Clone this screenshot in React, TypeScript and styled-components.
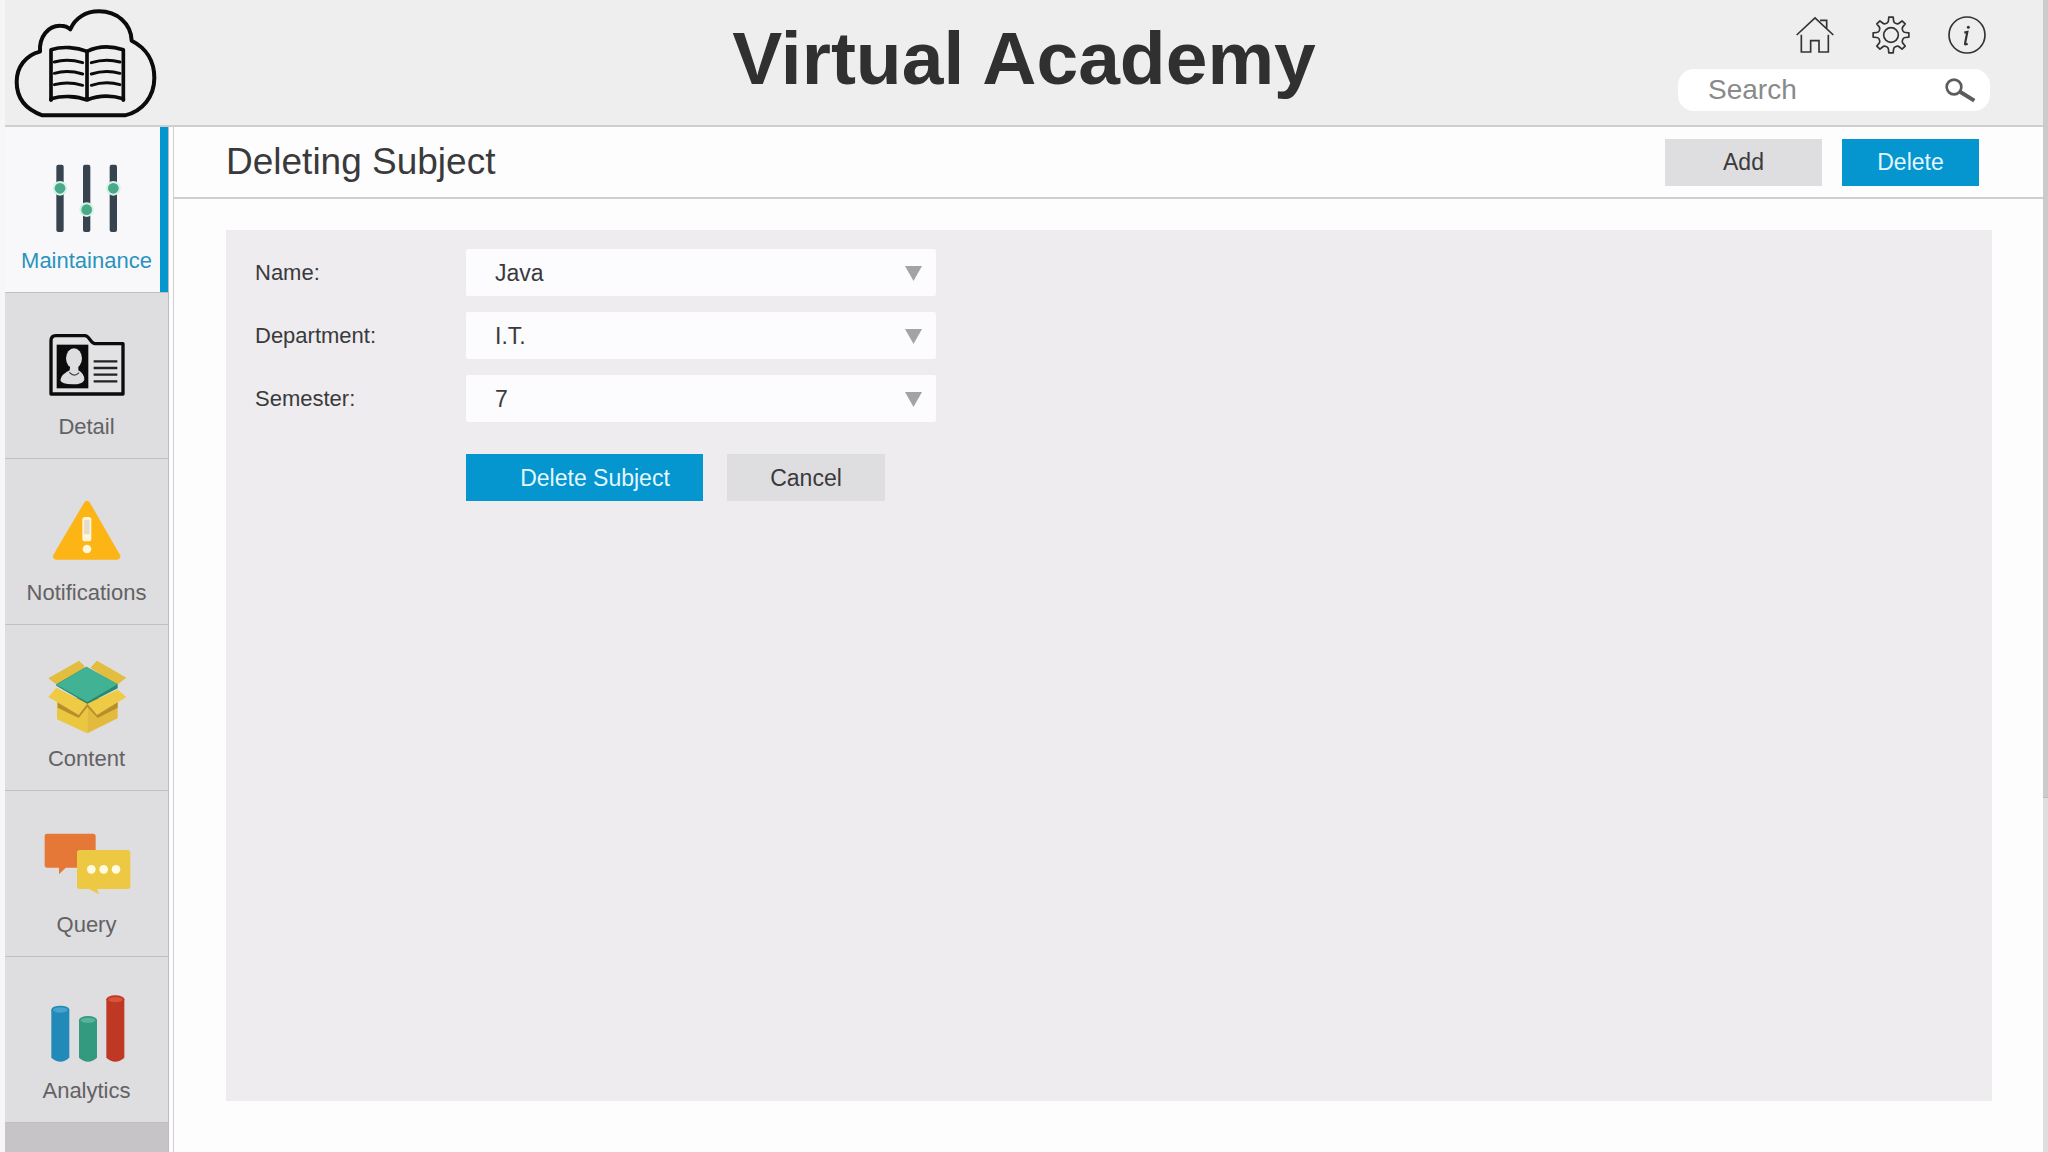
import React from "react";
import styled, { createGlobalStyle } from "styled-components";

const color = {
  ink: "#3a3a3c",
  title: "#303030",
  muted: "#626264",
  blue: "#0595cf",
  onBlue: "#e2f7ff",
  bar: "#eeeeee",
  tile: "#dedddf",
  line: "#cfcfd0",
  panel: "#eeecef",
  page: "#fdfdfd",
};

const GlobalStyle = createGlobalStyle`
  *, *::before, *::after { box-sizing: border-box; }
  body {
    margin: 0;
    background: ${color.page};
    color: ${color.ink};
    font-family: "Liberation Sans", Arial, sans-serif;
    font-size: 23px;
    line-height: 26px;
  }
  button, input, select { font: inherit; color: inherit; }
`;

const Frame = styled.div`
  display: flex;
  min-height: 100vh;
`;

const Gutter = styled.div`
  flex: 0 0 5px;
  background: #f6f6f7;
`;

const Rail = styled.div`
  display: flex;
  flex: 0 0 5px;
  background: #dedde0;
`;

const RailThumb = styled.div`
  width: 100%;
  height: 69.3%;
  border-bottom: 1px solid #bcbcbe;
  background: #cbcbcd;
`;

const Shell = styled.div`
  display: flex;
  flex: 1;
  flex-direction: column;
  min-width: 0;
`;

const Header = styled.header`
  display: grid;
  grid-template-columns: 1fr auto 1fr;
  align-items: center;
  height: 127px;
  border-bottom: 2px solid ${color.line};
  background: ${color.bar};
`;

const HeaderSide = styled.div`
  display: flex;
  padding-left: 8px;
`;

const LogoLink = styled.a`
  display: flex;
`;

const SiteTitle = styled.h1`
  margin: 0;
  color: ${color.title};
  font-size: 75px;
  line-height: 88px;
  padding-bottom: 10px;
  white-space: nowrap;
`;

const HeaderTools = styled.div`
  display: flex;
  flex-direction: column;
  align-items: flex-end;
  gap: 15px;
  padding: 2px 53px 0 0;
`;

const ToolLinks = styled.nav`
  display: flex;
  gap: 38px;
  padding: 0 4px;
`;

const ToolLink = styled.a`
  display: flex;
  color: #333333;
`;

const SearchBox = styled.form`
  display: flex;
  align-items: center;
  width: 312px;
  height: 42px;
  padding: 0 14px 0 30px;
  border-radius: 16px;
  background: #ffffff;
`;

const SearchInput = styled.input`
  flex: 1;
  min-width: 0;
  padding: 0;
  border: 0;
  outline: 0;
  background: transparent;
  font-size: 28px;
  line-height: 32px;
  &::placeholder { color: #8a8a8a; opacity: 1; }
`;

const SearchButton = styled.button`
  display: flex;
  padding: 0;
  border: 0;
  background: none;
  cursor: pointer;
`;

const Body = styled.div`
  display: flex;
  flex: 1;
`;

const Sidebar = styled.nav`
  flex: 0 0 164px;
  border-right: 1px solid #bdbbc0;
  background: #c6c4c7;
`;

const NavItem = styled.a<{ $active?: boolean }>`
  display: flex;
  flex-direction: column;
  align-items: center;
  justify-content: flex-end;
  gap: 7px;
  height: 166px;
  padding-bottom: 18px;
  border-bottom: 1px solid #c0bfc1;
  background: ${(p) => (p.$active ? "#f8f8fa" : color.tile)};
  box-shadow: ${(p) => (p.$active ? `inset -8px 0 ${color.blue}` : "none")};
  color: ${(p) => (p.$active ? "#2a93bd" : color.muted)};
  font-size: 22px;
  text-decoration: none;
`;

const Main = styled.main`
  display: flex;
  flex: 1;
  flex-direction: column;
  min-width: 0;
  margin-left: 4px;
  border-left: 1px solid #d3cfd2;
`;

const TitleBar = styled.div`
  display: flex;
  align-items: center;
  justify-content: space-between;
  height: 72px;
  padding: 0 64px 0 52px;
  border-bottom: 2px solid ${color.line};
`;

const PageTitle = styled.h2`
  margin: 0;
  font-size: 37px;
  font-weight: 400;
  line-height: 42px;
`;

const Actions = styled.div`
  display: flex;
  gap: 20px;
`;

const Button = styled.button<{ $primary?: boolean; $width: number }>`
  width: ${(p) => p.$width}px;
  height: 47px;
  padding: 0;
  border: 0;
  background: ${(p) => (p.$primary ? color.blue : color.tile)};
  color: ${(p) => (p.$primary ? color.onBlue : color.ink)};
  cursor: pointer;
`;

const SubmitButton = styled(Button)`
  padding-left: 21px;
`;

const Panel = styled.form`
  flex: 1;
  margin: 31px 51px 51px 52px;
  padding: 19px 29px;
  background: ${color.panel};
`;

const Fields = styled.div`
  display: grid;
  gap: 16px;
`;

const Field = styled.div`
  display: grid;
  grid-template-columns: 211px minmax(0, 470px);
  align-items: center;
`;

const FieldLabel = styled.label`
  font-size: 22px;
`;

const SelectWrap = styled.div`
  position: relative;
  display: flex;
`;

const Select = styled.select`
  appearance: none;
  width: 100%;
  height: 47px;
  padding: 0 44px 0 29px;
  border: 0;
  border-radius: 2px;
  background: #fcfbfd;
`;

const Arrow = styled.svg`
  position: absolute;
  top: 17px;
  right: 14px;
  pointer-events: none;
`;

const FormActions = styled.div`
  display: flex;
  gap: 24px;
  margin: 32px 0 0 211px;
`;

function LogoIcon() {
  return (
    <svg width="145" height="112" viewBox="40 15 435 336" fill="none" stroke="#0b0b0b" strokeWidth="12" strokeLinejoin="round" strokeLinecap="round" role="img" aria-label="Virtual Academy logo">
      <path d="M128 340 C78 322 51 290 51 240 C51 195 78 160 121 149 C118 104 146 70 182 71 C196 71 205 75 212 82 C226 48 258 28 298 28 C352 28 394 64 396 116 C440 138 464 178 464 228 C464 284 428 328 376 340 Z" />
      <path d="M154 294 V143 C190 132 232 136 262 148 C295 132 336 132 371 143 V294" strokeWidth="11" />
      <path d="M154 294 V290 C190 280 232 282 262 294 C295 280 336 280 371 290 V294 M262 148 V294" strokeWidth="11" />
      {[180, 214, 248].map((y) => (
        <path key={y} strokeWidth="9" d={`M164 ${y} C192 ${y - 8} 222 ${y - 6} 249 ${y + 2} M275 ${y + 2} C303 ${y - 7} 333 ${y - 8} 361 ${y}`} />
      ))}
    </svg>
  );
}

function HomeIcon() {
  return (
    <svg width="38" height="38" viewBox="466 50 114 114" fill="none" stroke="currentColor" strokeWidth="5" aria-hidden="true">
      <path d="M468 107 L523 56 L578 107 M538 63 H558 V88" />
      <path d="M482 106 V158 H510 V124 H535 V158 H563 V106" />
    </svg>
  );
}

const gearPath = (() => {
  const pt = (r: number, deg: number) => {
    const a = (deg * Math.PI) / 180;
    return `${(57 + r * Math.cos(a)).toFixed(1)} ${(57 + r * Math.sin(a)).toFixed(1)}`;
  };
  let d = "";
  for (let i = 0; i < 8; i++) {
    const a = i * 45;
    d += `${i ? "L" : "M"}${pt(44, a - 10)} L${pt(54, a - 7)} L${pt(54, a + 7)} L${pt(44, a + 10)} Q${pt(39, a + 12)} ${pt(38, a + 18)} L${pt(38, a + 27)} Q${pt(39, a + 33)} ${pt(44, a + 35)} `;
  }
  return d + "Z";
})();

function GearIcon() {
  return (
    <svg width="38" height="38" viewBox="0 0 114 114" fill="none" stroke="currentColor" strokeWidth="5" strokeLinejoin="round" aria-hidden="true">
      <path d={gearPath} />
      <circle cx="57" cy="57" r="22" />
    </svg>
  );
}

function InfoIcon() {
  return (
    <svg width="38" height="38" viewBox="0 0 114 114" fill="none" stroke="currentColor" strokeWidth="5" aria-hidden="true">
      <circle cx="57" cy="57" r="54" />
      <circle cx="61" cy="34" r="4.5" fill="currentColor" stroke="none" />
      <path d="M49 50 L58 48 L51 83 Q50 88 59 83" strokeWidth="6.5" />
    </svg>
  );
}

function SearchIcon() {
  return (
    <svg width="31" height="25" viewBox="0 0 93 75" fill="none" stroke="#5c5c5c" aria-hidden="true">
      <circle cx="27" cy="27" r="22" strokeWidth="8" />
      <path d="M46 42 L88 68" strokeWidth="12" />
    </svg>
  );
}

function TileIcon({ children }: { children: React.ReactNode }) {
  return (
    <svg width="100" height="80" viewBox="0 0 300 240" aria-hidden="true">
      {children}
    </svg>
  );
}

function SlidersIcon() {
  const tracks = [
    [69, 82],
    [149, 146],
    [229, 82],
  ];
  return (
    <TileIcon>
      {tracks.map(([x, y]) => (
        <g key={x}>
          <rect x={x - 11} y="11" width="22" height="202" rx="6" fill="#37444f" />
          <circle cx={x} cy={y} r="22" fill="#d3f3e6" />
          <circle cx={x} cy={y} r="16" fill="#49a98a" />
        </g>
      ))}
    </TileIcon>
  );
}

function DetailIcon() {
  return (
    <TileIcon>
      <path d="M42 201 V42 Q42 26 56 26 H144 C158 26 160 50 174 50 H258 V201 Z" fill="#e2e1e3" stroke="#0c0c0c" strokeWidth="10" strokeLinejoin="round" />
      <rect x="59" y="53" width="95" height="131" fill="#0c0c0c" />
      <ellipse cx="111" cy="94" rx="24" ry="30" fill="#dedddf" />
      <path d="M100 112 H124 V130 Q142 140 142 158 Q138 172 106 172 Q74 172 70 160 Q72 142 98 130 Z" fill="#dedddf" />
      <path d="M97 136 Q112 152 126 137" fill="none" stroke="#444444" strokeWidth="4" />
      <path d="M170 103 H241 M170 123 H241 M170 143 H241 M170 163 H241" stroke="#222222" strokeWidth="7" />
    </TileIcon>
  );
}

function WarningIcon() {
  return (
    <TileIcon>
      <path d="M150 34 L240 190 H58 Z" fill="#fdb415" stroke="#fdb415" strokeWidth="20" strokeLinejoin="round" />
      <rect x="136" y="72" width="27" height="73" rx="8" fill="#fff6dc" />
      <rect x="141" y="80" width="17" height="44" rx="3" fill="#e2ddcd" />
      <circle cx="150" cy="168" r="13" fill="#fff6dc" />
    </TileIcon>
  );
}

function BoxIcon() {
  return (
    <TileIcon>
      <path d="M34 58 L126 5 L142 20 L140 30 L60 78 Z" fill="#e3bd3f" />
      <path d="M180 5 L268 56 L240 78 L160 26 Z" fill="#e3bd3f" />
      <path d="M60 125 L151 140 V223 L60 181 Z" fill="#ebc63f" />
      <path d="M151 140 L242 125 V178 L151 223 Z" fill="#e3ba3b" />
      <path d="M62 146 L125 177 L151 144 L182 177 L242 146 V130 L151 110 L62 130 Z" fill="#b58f2c" />
      <path d="M58 86 L34 114 L125 168 L151 134 Z" fill="#efca45" />
      <path d="M242 92 L268 114 L180 168 L151 134 Z" fill="#efca45" />
      <path d="M58 76 L148 23 L242 76 V88 L151 134 L58 80 Z" fill="#26896f" />
      <path d="M58 77 L148 23 L242 76 L151 129 Z" fill="#42b294" />
    </TileIcon>
  );
}

function ChatIcon() {
  return (
    <TileIcon>
      <path d="M30 26 H168 Q176 26 176 34 V128 H86 L66 148 V128 H30 Q23 128 23 120 V34 Q23 26 30 26 Z" fill="#e57836" />
      <path d="M128 75 H272 Q280 75 280 83 V184 Q280 192 272 192 H180 L186 208 L156 192 H128 Q120 192 120 184 V83 Q120 75 128 75 Z" fill="#edc842" />
      {[163, 200, 237].map((x) => (
        <circle key={x} cx={x} cy="133" r="13" fill="#fffbe0" />
      ))}
    </TileIcon>
  );
}

function BarsIcon() {
  const bars = [
    { x: 43, y: 44, side: "#228ab8", top: "#45a3cd" },
    { x: 126, y: 75, side: "#339a80", top: "#57b399" },
    { x: 208, y: 13, side: "#bf3824", top: "#d9523b" },
  ];
  return (
    <TileIcon>
      {bars.map((b) => (
        <g key={b.x}>
          <path d={`M${b.x} ${b.y + 12} V200 Q${b.x + 27} 224 ${b.x + 54} 200 V${b.y + 12} Z`} fill={b.side} />
          <ellipse cx={b.x + 27} cy={b.y + 12} rx="27" ry="12" fill={b.side} />
          <ellipse cx={b.x + 27} cy={b.y + 13} rx="22" ry="8" fill={b.top} />
        </g>
      ))}
    </TileIcon>
  );
}

const navItems = [
  { label: "Maintainance", Icon: SlidersIcon, active: true },
  { label: "Detail", Icon: DetailIcon },
  { label: "Notifications", Icon: WarningIcon },
  { label: "Content", Icon: BoxIcon },
  { label: "Query", Icon: ChatIcon },
  { label: "Analytics", Icon: BarsIcon },
];

const fields = [
  { id: "name", label: "Name:", options: ["Java"] },
  { id: "department", label: "Department:", options: ["I.T."] },
  { id: "semester", label: "Semester:", options: ["7"] },
];

export default function App() {
  return (
    <>
      <GlobalStyle />
      <Frame>
        <Gutter />
        <Shell>
          <Header>
            <HeaderSide>
              <LogoLink href="#"><LogoIcon /></LogoLink>
            </HeaderSide>
            <SiteTitle>Virtual Academy</SiteTitle>
            <HeaderTools>
              <ToolLinks aria-label="Tools">
                <ToolLink href="#home" aria-label="Home"><HomeIcon /></ToolLink>
                <ToolLink href="#settings" aria-label="Settings"><GearIcon /></ToolLink>
                <ToolLink href="#about" aria-label="About"><InfoIcon /></ToolLink>
              </ToolLinks>
              <SearchBox role="search" onSubmit={(e) => e.preventDefault()}>
                <SearchInput type="text" placeholder="Search" aria-label="Search" />
                <SearchButton type="submit" aria-label="Search"><SearchIcon /></SearchButton>
              </SearchBox>
            </HeaderTools>
          </Header>
          <Body>
            <Sidebar aria-label="Sections">
              {navItems.map(({ label, Icon, active }) => (
                <NavItem key={label} href={`#${label.toLowerCase()}`} $active={active} aria-current={active ? "page" : undefined}>
                  <Icon />
                  {label}
                </NavItem>
              ))}
            </Sidebar>
            <Main>
              <TitleBar>
                <PageTitle>Deleting Subject</PageTitle>
                <Actions>
                  <Button type="button" $width={157}>Add</Button>
                  <Button type="button" $primary $width={137}>Delete</Button>
                </Actions>
              </TitleBar>
              <Panel onSubmit={(e) => e.preventDefault()}>
                <Fields>
                  {fields.map((f) => (
                    <Field key={f.id}>
                      <FieldLabel htmlFor={f.id}>{f.label}</FieldLabel>
                      <SelectWrap>
                        <Select id={f.id}>
                          {f.options.map((o) => (
                            <option key={o}>{o}</option>
                          ))}
                        </Select>
                        <Arrow width="17" height="15" viewBox="0 0 17 15" aria-hidden="true">
                          <path d="M0 0 H17 L8.5 15 Z" fill="#a3a2a4" />
                        </Arrow>
                      </SelectWrap>
                    </Field>
                  ))}
                </Fields>
                <FormActions>
                  <SubmitButton type="submit" $primary $width={237}>Delete Subject</SubmitButton>
                  <Button type="button" $width={158}>Cancel</Button>
                </FormActions>
              </Panel>
            </Main>
          </Body>
        </Shell>
        <Rail>
          <RailThumb />
        </Rail>
      </Frame>
    </>
  );
}
